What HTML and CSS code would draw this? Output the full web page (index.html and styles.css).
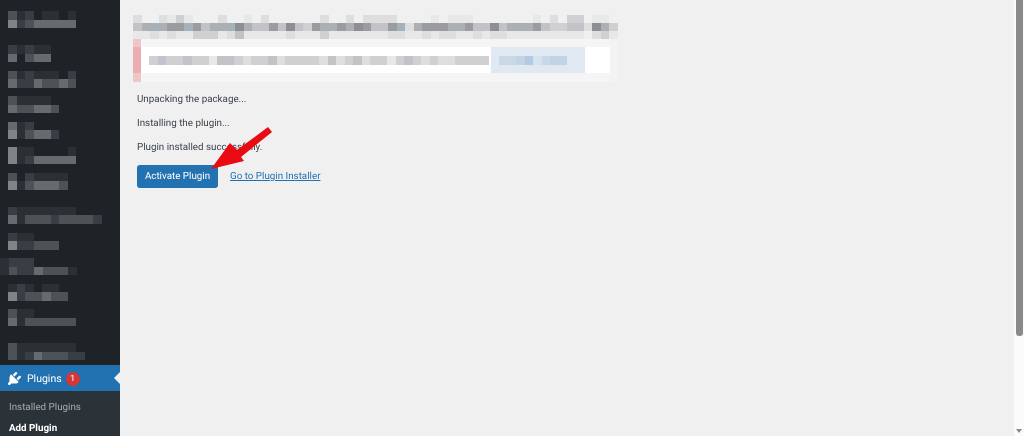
FILE: index.html
```html
<!DOCTYPE html>
<html lang="en">
<head>
<meta charset="utf-8">
<title>Installing Plugin</title>
<link rel="stylesheet" href="styles.css">
</head>
<body>
<aside class="sidebar">
  <div class="menu">
    <div class="item sep"><div class="m"><i class="d3"></i><i class="d1"></i><i class="d2"></i><i></i><i class="d1"></i><i class="d1"></i><i></i><i class="d1"></i></div><div class="m"><i class="d5"></i><i class="d2"></i><i class="d3"></i><i class="d4"></i><i class="d4"></i><i class="d4"></i><i class="d4"></i><i class="d4"></i></div></div>
    <div class="item"><div class="m"><i class="d2"></i><i class="d1"></i><i class="d2"></i><i class="d1"></i><i class="d1"></i></div><div class="m"><i class="d4"></i><i></i><i class="d3"></i><i class="d4"></i><i class="d4"></i></div></div>
    <div class="item"><div class="m"><i class="d3"></i><i class="d1"></i><i class="d2"></i><i class="d1"></i><i class="d1"></i><i class="d1"></i><i></i><i class="d2"></i></div><div class="m"><i class="d4"></i><i class="d2"></i><i class="d2"></i><i class="d4"></i><i class="d3"></i><i class="d3"></i><i class="d4"></i><i class="d3"></i></div></div>
    <div class="item"><div class="m"><i class="d3"></i><i class="d1"></i><i class="d1"></i><i class="d1"></i><i class="d1"></i></div><div class="m"><i class="d4"></i><i class="d3"></i><i class="d3"></i><i class="d4"></i><i class="d4"></i><i class="d3"></i></div></div>
    <div class="item"><div class="m"><i class="d4"></i><i class="d1"></i><i class="d2"></i></div><div class="m"><i class="d5"></i><i class="d1"></i><i class="d3"></i><i class="d4"></i><i class="d4"></i><i class="d2"></i></div></div>
    <div class="item"><div class="m"><i class="d5"></i><i class="d1"></i><i class="d1"></i><i></i><i></i><i></i><i></i><i class="d1"></i></div><div class="m"><i class="d5"></i><i class="d1"></i><i class="d2"></i><i class="d4"></i><i class="d4"></i><i class="d4"></i><i class="d4"></i><i class="d4"></i></div></div>
    <div class="item sep"><div class="m"><i class="d3"></i><i></i><i class="d2"></i><i class="d1"></i><i class="d1"></i><i class="d1"></i><i class="d1"></i></div><div class="m"><i class="d5"></i><i class="d1"></i><i class="d3"></i><i class="d4"></i><i class="d4"></i><i class="d4"></i><i class="d3"></i></div></div>
    <div class="item"><div class="m"><i class="d2"></i><i class="d1"></i><i class="d1"></i><i class="d1"></i><i class="d1"></i><i class="d1"></i><i class="d1"></i><i class="d1"></i></div><div class="m"><i class="d4"></i><i class="d1"></i><i class="d3"></i><i class="d3"></i><i class="d3"></i><i class="d2"></i><i class="d3"></i><i class="d3"></i><i class="d3"></i><i class="d3"></i><i class="d2"></i></div></div>
    <div class="item"><div class="m"><i class="d2"></i><i class="d1"></i><i class="d1"></i></div><div class="m"><i class="d5"></i><i class="d2"></i><i class="d2"></i><i class="d3"></i><i class="d3"></i><i class="d3"></i></div></div>
    <div class="item wide"><div class="m"><i class="d1"></i><i class="d2"></i><i class="d2"></i><i class="d2"></i></div><div class="m"><i class="d1"></i><i class="d3"></i><i class="d2"></i><i class="d2"></i><i class="d4"></i><i class="d3"></i><i class="d3"></i><i class="d3"></i><i class="d1"></i></div></div>
    <div class="item"><div class="m"><i class="d1"></i><i class="d2"></i><i class="d1"></i><i></i><i class="d1"></i><i class="d1"></i></div><div class="m"><i class="d5"></i><i class="d2"></i><i class="d3"></i><i class="d3"></i><i class="d4"></i><i class="d3"></i><i class="d3"></i></div></div>
    <div class="item sep"><div class="m"><i class="d3"></i><i class="d1"></i><i class="d1"></i></div><div class="m"><i class="d4"></i><i class="d1"></i><i class="d3"></i><i class="d3"></i><i class="d3"></i><i class="d3"></i><i class="d3"></i><i class="d3"></i></div></div>
    <div class="item last"><div class="m"><i class="d3"></i><i class="d1"></i><i class="d1"></i><i class="d1"></i><i class="d1"></i><i class="d1"></i><i class="d1"></i><i class="d1"></i></div><div class="m"><i class="d3"></i><i class="d1"></i><i class="d2"></i><i class="d4"></i><i class="d3"></i><i class="d3"></i><i class="d3"></i><i class="d2"></i><i class="d2"></i></div></div>
  </div>
  <div class="current">
    <svg class="plug" viewBox="0 0 20 20" aria-hidden="true"><path d="M13.11 4.36L9.87 7.6 8 5.73l3.24-3.24c.35-.34 1.05-.2 1.56.32.52.51.66 1.21.31 1.55zm-8 1.77l.91-1.12 9.01 9.01-1.19.84c-.71.71-2.63 1.16-3.82 1.16H6.14L4.9 17.26c-.59.59-1.54.59-2.12 0-.59-.58-.59-1.53 0-2.12l1.24-1.24v-3.88c0-1.13.4-3.19 1.09-3.89zm7.26 3.97l3.24-3.24c.34-.35 1.04-.21 1.55.31.52.51.66 1.21.31 1.55l-3.24 3.25z"/></svg>
    <span class="current-label">Plugins</span>
    <span class="badge">1</span>
    <span class="notch"></span>
  </div>
  <ul class="submenu">
    <li>Installed Plugins</li>
    <li class="active">Add Plugin</li>
  </ul>
</aside>
<main class="content">
  <div class="title">
    <div class="m"><i class="l2"></i><i></i><i></i><i class="l2"></i><i class="l1"></i><i class="l3"></i><i class="l1"></i><i></i><i></i><i></i><i class="l2"></i><i></i><i></i><i class="l1"></i><i></i><i class="l2"></i><i></i><i></i><i></i><i></i><i></i><i></i><i class="l2"></i><i></i><i></i><i class="l2"></i><i></i><i class="l2"></i><i class="l2"></i><i class="l2"></i><i class="l2"></i><i></i><i></i><i></i><i></i><i class="l1"></i><i></i><i class="l1"></i><i class="l1"></i><i class="l1"></i><i></i><i></i><i></i><i></i><i></i><i></i><i></i><i class="l1"></i><i></i><i class="l2"></i><i></i><i class="l3"></i><i class="l3"></i><i></i><i class="l1"></i><i class="l1"></i></div>
    <div class="m"><i class="l4"></i><i class="l5"></i><i class="b5"></i><i class="l5"></i><i class="l6"></i><i class="l6"></i><i class="b5"></i><i class="l6"></i><i class="l4"></i><i class="l5"></i><i class="l5"></i><i class="b5"></i><i class="l7"></i><i class="l5"></i><i class="l4"></i><i class="l4"></i><i class="l6"></i><i class="l4"></i><i class="l7"></i><i class="l4"></i><i class="l3"></i><i class="l6"></i><i class="l5"></i><i class="l5"></i><i class="l6"></i><i class="l5"></i><i class="l7"></i><i class="l6"></i><i class="l4"></i><i class="l4"></i><i class="l6"></i><i class="b5"></i><i class="l2"></i><i class="l5"></i><i class="l6"></i><i class="l6"></i><i class="l6"></i><i class="l5"></i><i class="l5"></i><i class="l6"></i><i class="l4"></i><i class="l4"></i><i class="l7"></i><i class="l4"></i><i class="l5"></i><i class="l5"></i><i class="l5"></i><i class="l6"></i><i class="l4"></i><i class="l3"></i><i class="l3"></i><i class="l4"></i><i class="l4"></i><i class="l2"></i><i class="l7"></i><i class="l5"></i><i class="l3"></i></div>
    <div class="m"><i class="l1"></i><i class="l1"></i><i class="l2"></i><i class="l1"></i><i class="l2"></i><i class="l1"></i><i class="l1"></i><i class="l3"></i><i class="l3"></i><i class="l3"></i><i class="l1"></i><i class="l2"></i><i class="l4"></i><i class="l1"></i><i class="l1"></i><i class="l1"></i><i class="l1"></i><i class="l1"></i><i class="l2"></i><i class="l1"></i><i class="l1"></i><i class="l1"></i><i class="l3"></i><i class="l1"></i><i class="l1"></i><i class="l1"></i><i class="l1"></i><i class="l1"></i><i class="l1"></i><i class="l1"></i><i class="l2"></i><i class="l2"></i><i class="l1"></i><i class="l1"></i><i class="l2"></i><i class="l1"></i><i class="l2"></i><i class="l2"></i><i class="l1"></i><i class="l1"></i><i class="l2"></i><i class="l1"></i><i class="l2"></i><i class="l2"></i><i class="l1"></i><i class="l1"></i><i class="l1"></i><i class="l1"></i><i class="l1"></i><i class="l1"></i><i class="l1"></i><i class="l1"></i><i class="l1"></i><i></i><i class="l2"></i><i class="l3"></i><i class="l1"></i></div>
  </div>
  <div class="notice">
    <div class="strip"></div>
    <div class="notice-body">
      <div class="notice-mid">
        <div class="mid-text"><div class="m"><i class="l3"></i><i class="p4"></i><i class="l3"></i><i class="l3"></i><i class="l4"></i><i class="l3"></i><i class="l3"></i><i class="l1"></i><i class="l4"></i><i class="l4"></i><i class="l3"></i><i class="l2"></i><i class="l3"></i><i class="l3"></i><i class="l4"></i><i class="l2"></i><i class="l3"></i><i class="l3"></i><i class="l3"></i><i class="l3"></i><i class="l2"></i><i class="l4"></i><i class="l2"></i><i class="l3"></i><i class="l4"></i><i class="l2"></i><i class="l3"></i><i class="l3"></i><i class="l1"></i><i class="l3"></i><i class="l4"></i><i class="l3"></i><i class="l2"></i><i class="l3"></i><i class="l2"></i><i class="l2"></i><i class="l3"></i><i class="l3"></i><i class="l3"></i><i class="l3"></i></div></div>
        <div class="mid-link"><div class="m"><i class="s1"></i><i class="s1"></i><i class="s2"></i><i class="s3"></i><i class="s0"></i><i class="s1"></i><i class="s2"></i><i class="s2"></i></div></div>
      </div>
    </div>
  </div>
  <div class="log">
    <p>Unpacking the package...</p>
    <p>Installing the plugin...</p>
    <p>Plugin installed successfully.</p>
    <div class="actions">
      <a class="button" href="#">Activate Plugin</a>
      <a class="link" href="#">Go to Plugin Installer</a>
    </div>
  </div>
</main>
<div class="scrollbar">
  <div class="thumb"></div>
  <div class="down"></div>
</div>
<svg class="arrow" viewBox="0 0 70 50" aria-hidden="true"><polygon points="1,44 20,18 27,25 58,2 62,7 31,32 34,36"/></svg>
</body>
</html>
```
FILE: styles.css
```css
* { box-sizing: border-box; }
html, body { height: 100%; }
body {
  margin: 0;
  display: flex;
  height: 436px;
  overflow: hidden;
  background: #f0f0f1;
  color: #3c434a;
  font-family: Roboto, "Open Sans", "Liberation Sans", sans-serif;
  font-size: 9.8px;
  text-rendering: geometricPrecision;
  position: relative;
}
.sidebar {
  width: 120px;
  flex: none;
  background: #1d2327;
  display: flex;
  flex-direction: column;
  color: #fff;
}
.menu { padding: 11px 0 5px 8px; height: 366px; }
.item { margin-bottom: 8.6px; filter: blur(.7px); }
.item.sep { margin-bottom: 17px; }
.item.last { margin-bottom: 0; }
.item.wide { margin-left: -8px; }
.m { display: flex; height: 8.5px; }
.m i { display: block; width: 8.5px; height: 100%; flex: none; }
.d1 { background: #2a3034; }
.d2 { background: #383e43; }
.d3 { background: #4c5256; }
.d4 { background: #666b70; }
.d5 { background: #7f8489; }
.current {
  height: 26px;
  flex: none;
  background: #2271b1;
  display: flex;
  align-items: center;
  padding: 1px 0 0 5.5px;
  position: relative;
}
.plug { width: 17px; height: 17px; fill: #fff; flex: none; }
.current-label { margin-left: 4.5px; font-size: 10.5px; filter: blur(.25px); }
.badge {
  width: 14px;
  height: 14px;
  border-radius: 50%;
  background: #d63638;
  margin-left: 4px;
  font-size: 8.5px;
  line-height: 14px;
  text-align: center;
}
.notch {
  position: absolute;
  right: 0;
  top: 7px;
  border: 6px solid transparent;
  border-left-width: 0;
  border-right-color: #f0f0f1;
}
.submenu {
  flex: 1;
  margin: 0;
  padding: 8px 0 0 9px;
  list-style: none;
  background: #2c3338;
  color: #a7aaad;
  font-size: 9.8px;
}
.submenu li { height: 21px; line-height: 18px; filter: blur(.25px); }
.submenu .active { color: #fff; font-weight: 700; }
.content { flex: 1; min-width: 0; padding: 15px 0 0 13px; }
.title { filter: blur(.7px); }
.l1 { background: #e8e8e9; }
.l2 { background: #dededf; }
.l3 { background: #d0d0d2; }
.l4 { background: #c2c3c6; }
.l5 { background: #adb0b3; }
.l6 { background: #9a9c9f; }
.l7 { background: #8d8f94; }
.b5 { background: #a5b1bb; }
.p4 { background: #c4c2cf; }
.s0 { background: #d6e2ee; }
.s1 { background: #c9d8e6; }
.s2 { background: #c2d3e4; }
.s3 { background: #b3cae2; }
.title .m { height: 8px; }
.notice {
  display: flex;
  width: 485px;
  height: 43px;
  background: #f3f3f3;
  filter: blur(.5px);
}
.strip {
  width: 8px;
  flex: none;
  background: #e9adb2;
  border-top: 8px solid #efc6c8;
  border-bottom: 9px solid #efc6c8;
}
.notice-body {
  width: 469px;
  flex: none;
  background: #f5f5f5;
  padding-top: 8px;
}
.notice-mid { display: flex; height: 26px; background: #fff; padding-right: 25px; }
.mid-text { width: 350px; flex: none; padding: 9px 0 0 8px; }
.mid-link { width: 94px; flex: none; padding: 9px 0 0 8px; background: #e0e9f2; }
.log { padding: 9px 0 0 4px; filter: blur(.25px); }
.log p { margin: 0 0 6px; line-height: 18px; }
.actions { display: flex; align-items: center; margin-top: 8px; gap: 12px; }
.button {
  display: block;
  width: 81px;
  height: 23px;
  line-height: 23px;
  text-align: center;
  background: #2271b1;
  color: #fff;
  border-radius: 3px;
  text-decoration: none;
  font-size: 9.8px;
}
.link { color: #2271b1; font-size: 9.8px; }
.scrollbar {
  width: 10px;
  flex: none;
  background: #fbfbfb;
  position: relative;
  padding-left: 2px;
}
.thumb { width: 7px; height: 336px; background: #8a8a8a; border-radius: 0 0 3px 3px; }
.down {
  position: absolute;
  left: 2px;
  bottom: 3px;
  border: 3px solid transparent;
  border-bottom-width: 0;
  border-top: 4px solid #8a8a8a;
}
.arrow {
  position: absolute;
  left: 210px;
  top: 125px;
  width: 70px;
  height: 50px;
  fill: #ea0a12;
  filter: blur(.3px);
}
```
